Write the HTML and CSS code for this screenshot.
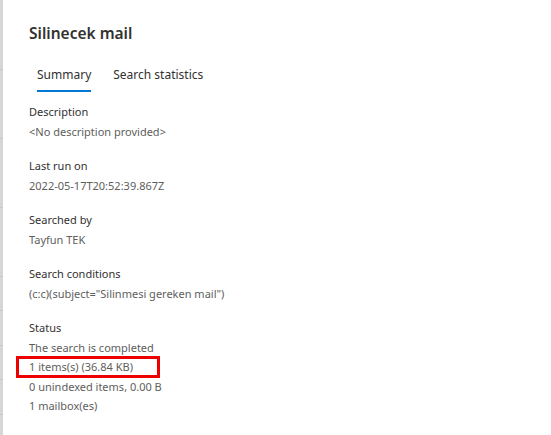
FILE: index.html
```html
<!DOCTYPE html>
<html lang="en">
<head>
  <meta charset="UTF-8" />
  <title>Silinecek mail</title>
  <meta name="viewport" content="width=device-width, initial-scale=1.0" />
  <link rel="stylesheet" href="styles.css">
</head>
<body>
  <div class="backdrop"></div>
  <div class="panel">
    <h1 class="title">Silinecek mail</h1>

    <div class="tabs" role="tablist">
      <button class="tab active" role="tab"><span>Summary</span></button>
      <button class="tab" role="tab"><span>Search statistics</span></button>
    </div>

    <div class="details">
      <div class="field">
        <div class="label">Description</div>
        <div class="value">&lt;No description provided&gt;</div>
      </div>
      <div class="field">
        <div class="label">Last run on</div>
        <div class="value">2022-05-17T20:52:39.867Z</div>
      </div>
      <div class="field">
        <div class="label">Searched by</div>
        <div class="value">Tayfun TEK</div>
      </div>
      <div class="field">
        <div class="label">Search conditions</div>
        <div class="value">(c:c)(subject="Silinmesi gereken mail")</div>
      </div>
      <div class="field">
        <div class="label">Status</div>
        <div class="value">The search is completed</div>
        <div class="value highlight">1 items(s) (36.84 KB)</div>
        <div class="value">0 unindexed items, 0.00 B</div>
        <div class="value">1 mailbox(es)</div>
      </div>
    </div>
  </div>
</body>
</html>
```

FILE: styles.css
```css
body {
  margin: 0;
  height: 100vh;
  display: flex;
  background: #fff;
  font-family: "Noto Sans", "Open Sans", sans-serif;
  color: #323130;
  overflow: hidden;
}
.backdrop {
  width: 3px;
  flex: none;
  background: repeating-linear-gradient(to bottom, #d6d6d6 0, #d6d6d6 33.5px, #c8c8c8 33.5px, #c8c8c8 34.5px);
  background-position: 0 1px;
}
.panel {
  flex: 1;
  padding: 22px 26px;
}
.title {
  margin: 0;
  font-size: 15.5px;
  font-weight: 600;
  line-height: 22px;
}
.tabs {
  display: flex;
  gap: 6px;
  margin-top: 16px;
}
.tab {
  background: none;
  border: 0;
  padding: 0 8px;
  font: inherit;
  font-size: 12px;
  color: #323130;
  cursor: pointer;
}
.tab span {
  display: inline-block;
  line-height: 19px;
  padding: 5px 0 6px;
  border-bottom: 2px solid transparent;
}
.tab.active span {
  border-bottom-color: #0078d4;
}
.details {
  display: flex;
  flex-direction: column;
  gap: 15px;
  margin-top: 10px;
}
.label, .value {
  font-size: 11px;
  line-height: 19.5px;
}
.value {
  color: #605e5c;
}
.highlight {
  position: relative;
}
.highlight::after {
  content: "";
  position: absolute;
  left: -13px;
  top: -1px;
  width: 144px;
  height: 22px;
  border: 3px solid #e00;
  box-sizing: border-box;
}
```
